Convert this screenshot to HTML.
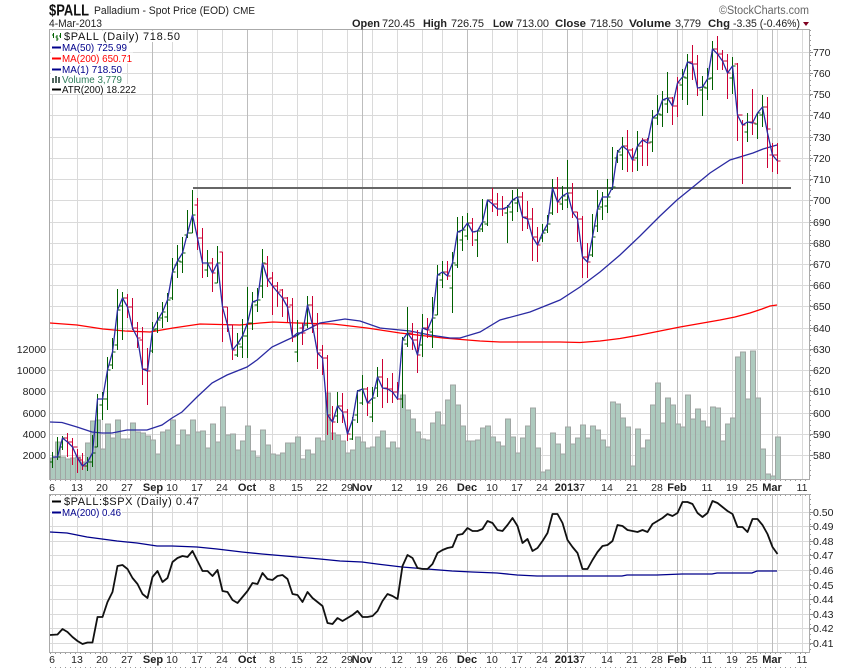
<!DOCTYPE html>
<html><head><meta charset="utf-8"><title>$PALL</title>
<style>html,body{margin:0;padding:0;background:#fff}svg{display:block}text{font-family:"Liberation Sans",Arial,sans-serif;font-size:10.5px;fill:#222}.b{font-weight:bold;font-size:11px}</style>
</head><body>
<svg width="850" height="668" viewBox="0 0 850 668" xmlns="http://www.w3.org/2000/svg">
<rect width="850" height="668" fill="#fff"/>
<!-- grid -->
<g stroke="#dadada" stroke-width="1" fill="none">
<path d="M50 52.5H809M50 73.5H809M50 94.5H809M50 115.5H809M50 137.5H809M50 158.5H809M50 179.5H809M50 200.5H809M50 222.5H809M50 243.5H809M50 264.5H809M50 285.5H809M50 306.5H809M50 328.5H809M50 349.5H809M50 370.5H809M50 391.5H809M50 413.5H809M50 434.5H809M50 455.5H809"/>
<path d="M50 512.5H809M50 526.5H809M50 541.5H809M50 555.5H809M50 570.5H809M50 585.5H809M50 599.5H809M50 614.5H809M50 628.5H809M50 643.5H809"/>
<path d="M52.5 30V479M77.5 30V479M102.5 30V479M127.5 30V479M172.5 30V479M197.5 30V479M222.5 30V479M272.5 30V479M297.5 30V479M322.5 30V479M347.5 30V479M372.5 30V479M397.5 30V479M422.5 30V479M442.5 30V479M492.5 30V479M517.5 30V479M542.5 30V479M582.5 30V479M607.5 30V479M632.5 30V479M657.5 30V479M682.5 30V479M707.5 30V479M732.5 30V479M757.5 30V479M777.5 30V479M802.5 30V479"/>
<path d="M52.5 494V652M77.5 494V652M102.5 494V652M127.5 494V652M172.5 494V652M197.5 494V652M222.5 494V652M272.5 494V652M297.5 494V652M322.5 494V652M347.5 494V652M372.5 494V652M397.5 494V652M422.5 494V652M442.5 494V652M492.5 494V652M517.5 494V652M542.5 494V652M582.5 494V652M607.5 494V652M632.5 494V652M657.5 494V652M682.5 494V652M707.5 494V652M732.5 494V652M757.5 494V652M777.5 494V652M802.5 494V652"/>
</g>
<g stroke="#bdbdbd" stroke-width="1" fill="none">
<path d="M152.5 30V479M247.5 30V479M362.5 30V479M467.5 30V479M567.5 30V479M677.5 30V479M772.5 30V479"/>
<path d="M152.5 494V652M247.5 494V652M362.5 494V652M467.5 494V652M567.5 494V652M677.5 494V652M772.5 494V652"/>
</g>
<!-- volume -->
<path fill="#a9c7bb" fill-opacity=".95" stroke="#a0a5a3" stroke-width="1" d="M50.5 479V458h5V479M55.5 479V442h5V479M60.5 479V457h5V479M65.5 479V459h5V479M70.5 479V458h5V479M75.5 479V457h5V479M80.5 479V462h5V479M85.5 479V443h5V479M90.5 479V421h5V479M95.5 479V420h5V479M100.5 479V449h5V479M105.5 479V424h5V479M110.5 479V438h5V479M115.5 479V420h5V479M120.5 479V439h5V479M125.5 479V439h5V479M130.5 479V423h5V479M135.5 479V432h5V479M140.5 479V433h5V479M145.5 479V436h5V479M150.5 479V440h5V479M155.5 479V454h5V479M160.5 479V432h5V479M165.5 479V430h5V479M170.5 479V420h5V479M175.5 479V445h5V479M180.5 479V430h5V479M185.5 479V435h5V479M190.5 479V420h5V479M195.5 479V432h5V479M200.5 479V431h5V479M205.5 479V448h5V479M210.5 479V424h5V479M215.5 479V442h5V479M220.5 479V407h5V479M225.5 479V435h5V479M230.5 479V434h5V479M235.5 479V450h5V479M240.5 479V441h5V479M245.5 479V426h5V479M250.5 479V451h5V479M255.5 479V457h5V479M260.5 479V430h5V479M265.5 479V445h5V479M270.5 479V454h5V479M275.5 479V455h5V479M280.5 479V453h5V479M285.5 479V443h5V479M290.5 479V443h5V479M295.5 479V437h5V479M300.5 479V459h5V479M305.5 479V450h5V479M310.5 479V454h5V479M315.5 479V438h5V479M320.5 479V441h5V479M325.5 479V393h5V479M330.5 479V433h5V479M335.5 479V435h5V479M340.5 479V441h5V479M345.5 479V453h5V479M350.5 479V450h5V479M355.5 479V437h5V479M360.5 479V442h5V479M365.5 479V448h5V479M370.5 479V447h5V479M375.5 479V437h5V479M380.5 479V431h5V479M385.5 479V448h5V479M390.5 479V442h5V479M395.5 479V448h5V479M400.5 479V395h5V479M405.5 479V410h5V479M410.5 479V419h5V479M415.5 479V432h5V479M420.5 479V439h5V479M425.5 479V440h5V479M430.5 479V423h5V479M435.5 479V412h5V479M440.5 479V425h5V479M445.5 479V400h5V479M450.5 479V385h5V479M455.5 479V405h5V479M460.5 479V426h5V479M465.5 479V441h5V479M470.5 479V441h5V479M475.5 479V440h5V479M480.5 479V428h5V479M485.5 479V426h5V479M490.5 479V437h5V479M495.5 479V442h5V479M500.5 479V446h5V479M505.5 479V419h5V479M510.5 479V437h5V479M515.5 479V453h5V479M520.5 479V438h5V479M525.5 479V426h5V479M530.5 479V408h5V479M535.5 479V448h5V479M540.5 479V472h5V479M545.5 479V470h5V479M550.5 479V433h5V479M555.5 479V444h5V479M560.5 479V454h5V479M565.5 479V427h5V479M570.5 479V444h5V479M575.5 479V438h5V479M580.5 479V425h5V479M585.5 479V438h5V479M590.5 479V426h5V479M595.5 479V430h5V479M600.5 479V440h5V479M605.5 479V447h5V479M610.5 479V402h5V479M615.5 479V404h5V479M620.5 479V418h5V479M625.5 479V427h5V479M630.5 479V466h5V479M635.5 479V429h5V479M640.5 479V448h5V479M645.5 479V440h5V479M650.5 479V405h5V479M655.5 479V383h5V479M660.5 479V423h5V479M665.5 479V398h5V479M670.5 479V405h5V479M675.5 479V424h5V479M680.5 479V427h5V479M685.5 479V395h5V479M690.5 479V419h5V479M695.5 479V409h5V479M700.5 479V421h5V479M705.5 479V427h5V479M710.5 479V407h5V479M715.5 479V408h5V479M720.5 479V441h5V479M725.5 479V424h5V479M730.5 479V418h5V479M735.5 479V357h5V479M740.5 479V352h5V479M745.5 479V399h5V479M750.5 479V351h5V479M755.5 479V398h5V479M760.5 479V449h5V479M765.5 479V474h5V479M770.5 479V476h5V479M775.5 479V437h5V479"/>
<!-- support line -->
<path d="M193 188H791" stroke="#666" stroke-width="2" fill="none"/>
<!-- MA200 -->
<path d="M50 323L77 325L103 329L125 331L150 332L173 328L200 324L240 325L260 323L273 322L297 323L333 324L367 328L400 333L443 338L480 341L500 342L560 342L580 342.500L600 341L620 338.500L640 335L660 331L680 327L700 323.500L720 320L735 317L750 313L762 309L770 306L777 305" stroke="#f00" stroke-width="1.3" fill="none"/>
<!-- MA50 -->
<path d="M50 422L62 422.500L77 427L92 432L102 433L112 433L127 430L147 430L162 425L172 418L182 412L197 397L212 383L227 375L247 367L257 360L272 347L287 340L298 335L300 333L320 323L345 319L360 321L380 328L410 331L430 335L450 338L460 338L480 332L500 320L530 312L560 300L580 287L600 272L620 255L640 236L660 216L677 200L693 187L710 173L730 160L753 153L763 149L777 145" stroke="#2a2aa2" stroke-width="1.3" fill="none"/>
<!-- green OHLC -->
<path stroke="#006000" stroke-width="1" fill="none" d="M52.500 468V452M49.500 462h3M52.500 457h3M57.500 460V437M54.500 457h3M57.500 457h3M62.500 450V436M59.500 447h3M62.500 438h3M87.500 471V457M84.500 466h3M87.500 462h3M92.500 467V435M89.500 462h3M92.500 453h3M97.500 447V394M94.500 447h3M97.500 399h3M102.500 420V392M99.500 405h3M102.500 399h3M107.500 410V357M104.500 399h3M107.500 370h3M112.500 369V338M109.500 365h3M112.500 352h3M117.500 350V289M114.500 345h3M117.500 310h3M122.500 340V292M119.500 306h3M122.500 298h3M152.500 353V322M149.500 351h3M152.500 330h3M157.500 333V312M154.500 329h3M157.500 320h3M162.500 328V302M159.500 318h3M162.500 312h3M167.500 322V293M164.500 317h3M167.500 300h3M172.500 300V258M169.500 298h3M172.500 272h3M177.500 278V245M174.500 265h3M177.500 261h3M182.500 273V237M179.500 262h3M182.500 253h3M187.500 238V210M184.500 235h3M187.500 233h3M192.500 233V190M189.500 233h3M192.500 215h3M207.500 277V250M204.500 270h3M207.500 263h3M217.500 283V246M214.500 283h3M217.500 263h3M237.500 357V333M234.500 355h3M237.500 344h3M242.500 358V319M239.500 347h3M242.500 336h3M247.500 358V287M244.500 336h3M247.500 323h3M252.500 330V292M249.500 323h3M252.500 302h3M257.500 312V288M254.500 305h3M257.500 300h3M262.500 298V249M259.500 286h3M262.500 263h3M297.500 362V320M294.500 352h3M297.500 333h3M307.500 328V296M304.500 325h3M307.500 305h3M337.500 423V392M334.500 416h3M337.500 406h3M352.500 440V417M349.500 439h3M352.500 420h3M357.500 423V390M354.500 415h3M357.500 391h3M362.500 405V375M359.500 403h3M362.500 389h3M372.500 422V387M369.500 417h3M372.500 398h3M377.500 397V367M374.500 388h3M377.500 377h3M402.500 408V337M399.500 399h3M402.500 340h3M407.500 347V307M404.500 344h3M407.500 333h3M422.500 357V314M419.500 345h3M422.500 328h3M432.500 348V297M429.500 332h3M432.500 318h3M437.500 315V265M434.500 315h3M437.500 275h3M442.500 288V261M439.500 280h3M442.500 272h3M452.500 313V252M449.500 288h3M452.500 263h3M457.500 268V217M454.500 265h3M457.500 232h3M462.500 251V216M459.500 240h3M462.500 230h3M467.500 240V213M464.500 236h3M467.500 223h3M477.500 257V230M474.500 240h3M477.500 231h3M482.500 232V199M479.500 229h3M482.500 222h3M487.500 226V200M484.500 224h3M487.500 200h3M507.500 243V205M504.500 213h3M507.500 207h3M512.500 221V190M509.500 212h3M512.500 200h3M517.500 212V189M514.500 203h3M517.500 197h3M542.500 242V224M539.500 238h3M542.500 233h3M547.500 233V215M544.500 230h3M547.500 224h3M552.500 215V179M549.500 213h3M552.500 188h3M562.500 210V186M559.500 204h3M562.500 196h3M567.500 208V160M564.500 200h3M567.500 193h3M592.500 257V214M589.500 255h3M592.500 237h3M597.500 232V190M594.500 226h3M597.500 209h3M602.500 220V192M599.500 207h3M602.500 197h3M607.500 213V179M604.500 206h3M607.500 197h3M612.500 190V147M609.500 188h3M612.500 187h3M617.500 163V150M614.500 158h3M617.500 152h3M622.500 170V137M619.500 155h3M622.500 146h3M637.500 171V131M634.500 158h3M637.500 146h3M652.500 152V110M649.500 142h3M652.500 118h3M657.500 125V95M654.500 118h3M657.500 114h3M662.500 127V91M659.500 115h3M662.500 100h3M667.500 113V72M664.500 104h3M667.500 98h3M682.500 100V69M679.500 85h3M682.500 77h3M687.500 105V54M684.500 78h3M687.500 62h3M702.500 116V76M699.500 90h3M702.500 87h3M707.500 100V68M704.500 88h3M707.500 79h3M712.500 90V41M709.500 78h3M712.500 49h3M732.500 94V57M729.500 78h3M732.500 66h3M747.500 142V113M744.500 132h3M747.500 122h3M757.500 139V113M754.500 124h3M757.500 113h3M762.500 127V95M759.500 115h3M762.500 107h3"/>
<!-- red OHLC -->
<path stroke="#cc0033" stroke-width="1" fill="none" d="M67.500 457V433M64.500 438h3M67.500 442h3M72.500 465V438M69.500 442h3M72.500 447h3M77.500 473V449M74.500 447h3M77.500 458h3M82.500 470V453M79.500 460h3M82.500 466h3M127.500 318V294M124.500 298h3M127.500 307h3M132.500 330V298M129.500 307h3M132.500 328h3M137.500 348V322M134.500 328h3M137.500 338h3M142.500 385V327M139.500 340h3M142.500 369h3M147.500 405V348M144.500 369h3M147.500 371h3M197.500 250V198M194.500 205h3M197.500 238h3M202.500 278V228M199.500 238h3M202.500 263h3M212.500 292V258M209.500 263h3M212.500 273h3M222.500 342V252M219.500 252h3M222.500 307h3M227.500 332V307M224.500 307h3M227.500 325h3M232.500 360V325M229.500 325h3M232.500 350h3M267.500 287V256M264.500 264h3M267.500 279h3M272.500 315V272M269.500 278h3M272.500 286h3M277.500 307V282M274.500 286h3M277.500 292h3M282.500 317V289M279.500 290h3M282.500 298h3M287.500 322V297M284.500 298h3M287.500 307h3M292.500 342V298M289.500 305h3M292.500 337h3M302.500 345V323M299.500 328h3M302.500 333h3M312.500 333V296M309.500 305h3M312.500 325h3M317.500 369V313M314.500 325h3M317.500 353h3M322.500 375V345M319.500 350h3M322.500 358h3M327.500 435V355M324.500 358h3M327.500 415h3M332.500 440V406M329.500 420h3M332.500 422h3M342.500 423V393M339.500 406h3M342.500 412h3M347.500 441V409M344.500 412h3M347.500 434h3M367.500 416V387M364.500 389h3M367.500 403h3M382.500 408V359M379.500 377h3M382.500 388h3M387.500 403V378M384.500 388h3M387.500 389h3M392.500 403V373M389.500 389h3M392.500 392h3M397.500 400V382M394.500 392h3M397.500 399h3M412.500 350V323M409.500 333h3M412.500 340h3M417.500 373V330M414.500 340h3M417.500 355h3M427.500 338V318M424.500 328h3M427.500 330h3M447.500 280V261M444.500 272h3M447.500 276h3M472.500 246V218M469.500 223h3M472.500 232h3M492.500 212V188M489.500 200h3M492.500 204h3M497.500 216V193M494.500 204h3M497.500 209h3M502.500 216V196M499.500 209h3M502.500 209h3M522.500 231V192M519.500 197h3M522.500 217h3M527.500 229V201M524.500 217h3M527.500 219h3M532.500 261V208M529.500 219h3M532.500 237h3M537.500 262V227M534.500 237h3M537.500 245h3M557.500 213V177M554.500 188h3M557.500 202h3M572.500 218V183M569.500 193h3M572.500 212h3M577.500 242V212M574.500 212h3M577.500 219h3M582.500 278V216M579.500 219h3M582.500 257h3M587.500 278V243M584.500 257h3M587.500 262h3M627.500 172V130M624.500 146h3M627.500 150h3M632.500 172V148M629.500 150h3M632.500 160h3M642.500 166V138M639.500 146h3M642.500 140h3M647.500 166V138M644.500 140h3M647.500 143h3M672.500 125V97M669.500 98h3M672.500 106h3M677.500 117V77M674.500 106h3M677.500 83h3M692.500 80V45M689.500 62h3M692.500 64h3M697.500 96V55M694.500 64h3M697.500 88h3M717.500 70V36M714.500 49h3M717.500 54h3M722.500 70V50M719.500 54h3M722.500 61h3M727.500 99V54M724.500 61h3M727.500 73h3M737.500 141V63M734.500 64h3M737.500 115h3M742.500 184V120M739.500 115h3M742.500 125h3M752.500 135V89M749.500 122h3M752.500 123h3M767.500 168V97M764.500 107h3M767.500 129h3M772.500 172V143M769.500 155h3M772.500 155h3M777.500 174V143M774.500 155h3M777.500 161h3"/>
<!-- close line -->
<path stroke="#2a2aa2" stroke-width="1.3" fill="none" stroke-linejoin="round" d="M52.500 457L57.500 457L62.500 438L67.500 442L72.500 447L77.500 458L82.500 466L87.500 462L92.500 453L97.500 399L102.500 399L107.500 370L112.500 352L117.500 310L122.500 298L127.500 307L132.500 328L137.500 338L142.500 369L147.500 371L152.500 330L157.500 320L162.500 312L167.500 300L172.500 272L177.500 261L182.500 253L187.500 233L192.500 215L197.500 238L202.500 263L207.500 263L212.500 273L217.500 263L222.500 307L227.500 325L232.500 350L237.500 344L242.500 336L247.500 323L252.500 302L257.500 300L262.500 263L267.500 279L272.500 286L277.500 292L282.500 298L287.500 307L292.500 337L297.500 333L302.500 333L307.500 305L312.500 325L317.500 353L322.500 358L327.500 415L332.500 422L337.500 406L342.500 412L347.500 434L352.500 420L357.500 391L362.500 389L367.500 403L372.500 398L377.500 377L382.500 388L387.500 389L392.500 392L397.500 399L402.500 340L407.500 333L412.500 340L417.500 355L422.500 328L427.500 330L432.500 318L437.500 275L442.500 272L447.500 276L452.500 263L457.500 232L462.500 230L467.500 223L472.500 232L477.500 231L482.500 222L487.500 200L492.500 204L497.500 209L502.500 209L507.500 207L512.500 200L517.500 197L522.500 217L527.500 219L532.500 237L537.500 245L542.500 233L547.500 224L552.500 188L557.500 202L562.500 196L567.500 193L572.500 212L577.500 219L582.500 257L587.500 262L592.500 237L597.500 209L602.500 197L607.500 197L612.500 187L617.500 152L622.500 146L627.500 150L632.500 160L637.500 146L642.500 140L647.500 143L652.500 118L657.500 114L662.500 100L667.500 98L672.500 106L677.500 83L682.500 77L687.500 62L692.500 64L697.500 88L702.500 87L707.500 79L712.500 49L717.500 54L722.500 61L727.500 73L732.500 66L737.500 115L742.500 125L747.500 122L752.500 123L757.500 113L762.500 107L767.500 133L772.500 155L777.500 161"/>
<!-- panel 2 lines -->
<path stroke="#00008b" stroke-width="1.3" fill="none" d="M50 532L67 533L87 537L117 541L137 543L157 546L172 546L197 547L217 549L242 552L262 554L297 557L320 559L340 561L362 562L377 564L402 567L427 569L452 571L472 572L497 573L517 575L537 576L570 576L590 576L600 576L622 576L627 575L652 575L657 575L682 574L712 574L717 573L752 573L757 571L777 571"/>
<path stroke="#111" stroke-width="1.800" fill="none" stroke-linejoin="round" d="M50 635L57.500 634.500L62.500 629L67.500 632L72.500 637L77.500 641L82.500 644L87.500 642.500L92.500 642.500L97.500 617L102.500 617L107.500 602L112.500 592L117.500 566L122.500 565L127.500 569L132.500 578L137.500 584L142.500 594L147.500 598L152.500 577L157.500 571L162.500 582L167.500 578L172.500 562L177.500 558L182.500 556L187.500 557L192.500 551L197.500 561L202.500 571L207.500 571L212.500 576L217.500 570L222.500 591L227.500 592L232.500 600L237.500 603L242.500 597L247.500 591L252.500 583L257.500 584L262.500 573L267.500 579L272.500 580L277.500 576L282.500 575L287.500 579L292.500 594L297.500 595L302.500 602L307.500 592L312.500 598L317.500 602L322.500 606L327.500 623L332.500 624L337.500 618L342.500 621L347.500 618L352.500 615L357.500 611L362.500 617L367.500 617L372.500 616L377.500 611L382.500 601L387.500 594L392.500 596L397.500 599L402.500 566L407.500 555L412.500 558L417.500 568L422.500 569L427.500 569L432.500 564L437.500 553L442.500 550L447.500 548L452.500 547L457.500 535L462.500 534L467.500 528L472.500 531L477.500 531L482.500 529L487.500 521L492.500 523L497.500 530L502.500 531L507.500 525L512.500 518L517.500 526L522.500 543L527.500 539L532.500 551L537.500 548L542.500 541L547.500 533L552.500 514L557.500 514L562.500 523L567.500 540L572.500 547L577.500 553L582.500 569L587.500 569L592.500 560L597.500 552L602.500 546L607.500 545L612.500 541L617.500 525L622.500 526L627.500 530L632.500 531L637.500 532L642.500 530L647.500 532L652.500 524L657.500 521L662.500 518L667.500 514L672.500 516L677.500 513L682.500 502L687.500 502L692.500 504L697.500 513L702.500 517L707.500 513L712.500 501L717.500 503L722.500 507L727.500 511L732.500 514L737.500 527L742.500 527L747.500 532L752.500 519L757.500 519L762.500 525L767.500 534L772.500 547L777.500 554"/>
<!-- panel frames -->
<g fill="none" stroke="#aaa" stroke-width="1">
<path d="M49.500 29.500H809.500V479.500H49.500Z"/>
<path d="M49.500 494.500H809.500V652.500H49.500Z"/>
</g>
<g fill="none" stroke="#999" stroke-width="1" stroke-dasharray="1 4">
<path d="M50 480.500H810M50 495.500H810M50 653.500H810M50 667.500H810M810.500 30V479M810.500 494V652"/>
</g>
<path d="M810 52.500h3M810 73.500h3M810 94.500h3M810 115.500h3M810 137.500h3M810 158.500h3M810 179.500h3M810 200.500h3M810 222.500h3M810 243.500h3M810 264.500h3M810 285.500h3M810 306.500h3M810 328.500h3M810 349.500h3M810 370.500h3M810 391.500h3M810 413.500h3M810 434.500h3M810 455.500h3M810 512.500h3M810 526.500h3M810 541.500h3M810 555.500h3M810 570.500h3M810 585.500h3M810 599.500h3M810 614.500h3M810 628.500h3M810 643.500h3" stroke="#888" fill="none"/>
<!-- legend backgrounds -->
<g fill="#fff"><rect x="51" y="31" width="130" height="11"/><rect x="51" y="42" width="78" height="10.500"/><rect x="51" y="52.500" width="82" height="11"/><rect x="51" y="63.500" width="71" height="10.500"/><rect x="51" y="74" width="71" height="10"/><rect x="51" y="84" width="85" height="10"/>
<rect x="51" y="496" width="149" height="10.500"/><rect x="51" y="506.500" width="71" height="10.500"/></g>
<!-- legend icons -->
<path d="M53.500 33V38M52 35H53.500M57 35V41M55.500 37H57M57 39H58.500M60.500 33V38M59 36H60.500" stroke="#006000" fill="none"/>
<path d="M52 47.500H61" stroke="#00008b" stroke-width="2"/><path d="M52 58.500H61" stroke="#f00" stroke-width="2"/><path d="M52 69.500H61" stroke="#00008b" stroke-width="2"/><path d="M52 89.500H61" stroke="#000" stroke-width="2"/>
<path d="M52 78h2v5h-2zM55 76h2v7h-2zM58 77h2v6h-2z" fill="#51675f"/>
<path d="M52 501.500H61" stroke="#000" stroke-width="2"/><path d="M52 512.500H61" stroke="#00008b" stroke-width="2"/>
<!-- legend text -->
<text x="64" y="40" textLength="116" lengthAdjust="spacing" style="font-size:11px;fill:#111">$PALL (Daily) 718.50</text>
<text x="62" y="51" textLength="65" lengthAdjust="spacingAndGlyphs" style="font-size:10.5px;fill:#00008b">MA(50) 725.99</text>
<text x="62" y="62" textLength="70" lengthAdjust="spacingAndGlyphs" style="font-size:10.5px;fill:#f00">MA(200) 650.71</text>
<text x="62" y="73" textLength="60" lengthAdjust="spacingAndGlyphs" style="font-size:10.5px;fill:#00008b">MA(1) 718.50</text>
<text x="62" y="83" textLength="60" lengthAdjust="spacingAndGlyphs" style="font-size:10.5px;fill:#2e7d5b">Volume 3,779</text>
<text x="62" y="93" textLength="74" lengthAdjust="spacingAndGlyphs" style="font-size:10.5px;fill:#111">ATR(200) 18.222</text>
<text x="64" y="505" textLength="135" lengthAdjust="spacing" style="font-size:11px;fill:#111">$PALL:$SPX (Daily) 0.47</text>
<text x="62" y="516" textLength="59" lengthAdjust="spacingAndGlyphs" style="font-size:10.5px;fill:#00008b">MA(200) 0.46</text>
<!-- header -->
<text x="49" y="15.500" class="b" textLength="40" lengthAdjust="spacingAndGlyphs" style="font-size:16px;fill:#111">$PALL</text>
<text x="94" y="14" textLength="135" lengthAdjust="spacingAndGlyphs" style="font-size:11px;fill:#222">Palladium - Spot Price (EOD)</text>
<text x="233" y="14" textLength="22" lengthAdjust="spacingAndGlyphs" style="font-size:10px;fill:#222">CME</text>
<text x="49" y="27" textLength="53" lengthAdjust="spacingAndGlyphs" style="font-size:11px;fill:#222">4-Mar-2013</text>
<text x="719" y="14" textLength="90" lengthAdjust="spacingAndGlyphs" style="font-size:11.500px;fill:#666">©StockCharts.com</text>
<g>
<text x="352" y="27" class="b" textLength="28" lengthAdjust="spacingAndGlyphs">Open</text><text x="382" y="27" textLength="33" style="font-size:11px">720.45</text>
<text x="423" y="27" class="b" textLength="24" lengthAdjust="spacingAndGlyphs">High</text><text x="451" y="27" textLength="33" style="font-size:11px">726.75</text>
<text x="493" y="27" class="b" textLength="20" lengthAdjust="spacingAndGlyphs">Low</text><text x="516" y="27" textLength="33" style="font-size:11px">713.00</text>
<text x="555" y="27" class="b" textLength="31" lengthAdjust="spacingAndGlyphs">Close</text><text x="590" y="27" textLength="33" style="font-size:11px">718.50</text>
<text x="629" y="27" class="b" textLength="42" lengthAdjust="spacingAndGlyphs">Volume</text><text x="675" y="27" textLength="26" style="font-size:11px">3,779</text>
<text x="708" y="27" class="b" textLength="22" lengthAdjust="spacingAndGlyphs">Chg</text><text x="733" y="27" textLength="67" lengthAdjust="spacingAndGlyphs" style="font-size:11px">-3.35 (-0.46%)</text>
</g>
<path d="M803 22H809L806 26Z" fill="#800020"/>
<!-- right labels -->
<g text-anchor="start">
<text x="813" y="56">770</text><text x="813" y="77">760</text><text x="813" y="98">750</text><text x="813" y="119">740</text><text x="813" y="141">730</text><text x="813" y="162">720</text><text x="813" y="183">710</text><text x="813" y="204">700</text><text x="813" y="226">690</text><text x="813" y="247">680</text><text x="813" y="268">670</text><text x="813" y="289">660</text><text x="813" y="310">650</text><text x="813" y="332">640</text><text x="813" y="353">630</text><text x="813" y="374">620</text><text x="813" y="395">610</text><text x="813" y="417">600</text><text x="813" y="438">590</text><text x="813" y="459">580</text>
<text x="813" y="516">0.50</text><text x="813" y="530">0.49</text><text x="813" y="545">0.48</text><text x="813" y="559">0.47</text><text x="813" y="574">0.46</text><text x="813" y="589">0.45</text><text x="813" y="603">0.44</text><text x="813" y="618">0.43</text><text x="813" y="632">0.42</text><text x="813" y="647">0.41</text>
</g>
<g text-anchor="end">
<text x="46" y="353">12000</text><text x="46" y="374">10000</text><text x="46" y="395">8000</text><text x="46" y="417">6000</text><text x="46" y="438">4000</text><text x="46" y="459">2000</text>
</g>
<!-- date labels -->
<g text-anchor="middle">
<text x="52" y="491">6</text><text x="77" y="491">13</text><text x="102" y="491">20</text><text x="127" y="491">27</text><text x="153" y="491" class="b">Sep</text><text x="172" y="491">10</text><text x="197" y="491">17</text><text x="222" y="491">24</text><text x="247" y="491" class="b">Oct</text><text x="272" y="491">8</text><text x="297" y="491">15</text><text x="322" y="491">22</text><text x="347" y="491">29</text><text x="362" y="491" class="b">Nov</text><text x="397" y="491">12</text><text x="422" y="491">19</text><text x="442" y="491">26</text><text x="467" y="491" class="b">Dec</text><text x="492" y="491">10</text><text x="517" y="491">17</text><text x="542" y="491">24</text><text x="567" y="491" class="b">2013</text><text x="582" y="491">7</text><text x="607" y="491">14</text><text x="632" y="491">21</text><text x="657" y="491">28</text><text x="677" y="491" class="b">Feb</text><text x="707" y="491">11</text><text x="732" y="491">19</text><text x="752" y="491">25</text><text x="772" y="491" class="b">Mar</text><text x="802" y="491">11</text>
<text x="52" y="663">6</text><text x="77" y="663">13</text><text x="102" y="663">20</text><text x="127" y="663">27</text><text x="153" y="663" class="b">Sep</text><text x="172" y="663">10</text><text x="197" y="663">17</text><text x="222" y="663">24</text><text x="247" y="663" class="b">Oct</text><text x="272" y="663">8</text><text x="297" y="663">15</text><text x="322" y="663">22</text><text x="347" y="663">29</text><text x="362" y="663" class="b">Nov</text><text x="397" y="663">12</text><text x="422" y="663">19</text><text x="442" y="663">26</text><text x="467" y="663" class="b">Dec</text><text x="492" y="663">10</text><text x="517" y="663">17</text><text x="542" y="663">24</text><text x="567" y="663" class="b">2013</text><text x="582" y="663">7</text><text x="607" y="663">14</text><text x="632" y="663">21</text><text x="657" y="663">28</text><text x="677" y="663" class="b">Feb</text><text x="707" y="663">11</text><text x="732" y="663">19</text><text x="752" y="663">25</text><text x="772" y="663" class="b">Mar</text><text x="802" y="663">11</text>
</g>
</svg>
</body></html>
